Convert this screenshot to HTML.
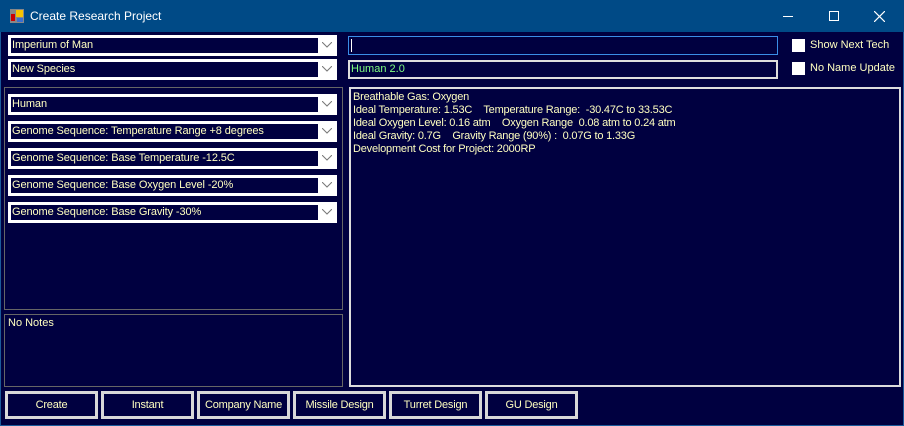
<!DOCTYPE html>
<html><head><style>
*{margin:0;padding:0;box-sizing:border-box}
body{width:904px;height:426px;background:#000040;font-family:"Liberation Sans",sans-serif;font-size:11px;color:#ffffc0;position:relative;overflow:hidden}
.tb{position:absolute;left:0;top:0;width:904px;height:32px;background:#004a86}
.frame{position:absolute;left:0;top:32px;width:904px;height:394px;border:1px solid #1a5a9a;border-top:none}
.ttl{position:absolute;left:30px;top:9px;color:#fff;font-size:12px}
.cb{position:absolute;left:8px;width:329px;height:21px;background:#fff}
.cb .in{position:absolute;left:3px;top:3px;width:307px;height:15px;background:#000040;padding-left:1px;line-height:15px;white-space:nowrap;overflow:hidden;letter-spacing:-0.1px}
.cb svg{position:absolute;right:5px;top:7px}
.tx{position:absolute;border:2px solid #ddd;background:#000040}
.btn{position:absolute;top:391px;height:28px;width:93px;border:3px solid #d8d8d8;background:#000040;text-align:center;line-height:22px;font-size:11px;letter-spacing:-0.2px}
.chk{position:absolute;left:792px;width:13px;height:13px;background:#fff}
.lbl{position:absolute;left:810px;font-size:11px}
</style></head><body>
<div class="tb"></div>
<div class="frame"></div>
<svg style="position:absolute;left:10px;top:9px" width="14" height="14"><rect x="0" y="0" width="14" height="14" fill="#888"/><rect x="6" y="1" width="7" height="7" fill="#f6c400"/><rect x="1" y="5" width="4" height="7" fill="#c00"/><rect x="7" y="9" width="6" height="4" fill="#3a6fd0"/></svg>
<div class="ttl">Create Research Project</div>
<div style="position:absolute;left:783px;top:16px;width:10px;height:1px;background:#fff"></div>
<div style="position:absolute;left:829px;top:11px;width:10px;height:10px;border:1px solid #fff"></div>
<svg style="position:absolute;left:874px;top:11px" width="11" height="11"><path d="M0 0L11 11M11 0L0 11" stroke="#fff" stroke-width="1.2"/></svg>

<div class="cb" style="top:35px"><div class="in">Imperium of Man</div><svg width="10" height="6"><path d="M0 0L5 5L10 0" stroke="#777" fill="none"/></svg></div>
<div class="cb" style="top:59px"><div class="in">New Species</div><svg width="10" height="6"><path d="M0 0L5 5L10 0" stroke="#777" fill="none"/></svg></div>

<div style="position:absolute;left:4px;top:87px;width:339px;height:223px;border:1px solid #666"></div>
<div class="cb" style="top:94px"><div class="in">Human</div><svg width="10" height="6"><path d="M0 0L5 5L10 0" stroke="#777" fill="none"/></svg></div>
<div class="cb" style="top:121px"><div class="in">Genome Sequence: Temperature Range +8 degrees</div><svg width="10" height="6"><path d="M0 0L5 5L10 0" stroke="#777" fill="none"/></svg></div>
<div class="cb" style="top:148px"><div class="in">Genome Sequence: Base Temperature -12.5C</div><svg width="10" height="6"><path d="M0 0L5 5L10 0" stroke="#777" fill="none"/></svg></div>
<div class="cb" style="top:175px"><div class="in">Genome Sequence: Base Oxygen Level -20%</div><svg width="10" height="6"><path d="M0 0L5 5L10 0" stroke="#777" fill="none"/></svg></div>
<div class="cb" style="top:202px"><div class="in">Genome Sequence: Base Gravity -30%</div><svg width="10" height="6"><path d="M0 0L5 5L10 0" stroke="#777" fill="none"/></svg></div>

<div style="position:absolute;left:4px;top:314px;width:339px;height:73px;border:1px solid #666;padding:2px 3px">No Notes</div>

<div class="tx" style="left:348px;top:36px;width:430px;height:19px;border:1px solid #3a8ee8"><div style="position:absolute;left:2px;top:2px;width:1px;height:13px;background:#fff"></div></div>
<div class="tx" style="left:348px;top:60px;width:430px;height:19px;color:#80ff80;padding-left:1px;line-height:15px">Human 2.0</div>

<div class="chk" style="top:39px"></div><div class="lbl" style="top:39px">Show Next Tech</div>
<div class="chk" style="top:62px"></div><div class="lbl" style="top:62px">No Name Update</div>

<div class="tx" style="left:349px;top:87px;width:552px;height:300px;padding:2px 2px;line-height:13px;letter-spacing:-0.2px;white-space:pre">Breathable Gas: Oxygen
Ideal Temperature: 1.53C    Temperature Range:  -30.47C to 33.53C
Ideal Oxygen Level: 0.16 atm    Oxygen Range  0.08 atm to 0.24 atm
Ideal Gravity: 0.7G    Gravity Range (90%) :  0.07G to 1.33G
Development Cost for Project: 2000RP</div>

<div class="btn" style="left:5px">Create</div>
<div class="btn" style="left:101px">Instant</div>
<div class="btn" style="left:197px">Company Name</div>
<div class="btn" style="left:293px">Missile Design</div>
<div class="btn" style="left:389px">Turret Design</div>
<div class="btn" style="left:485px">GU Design</div>
</body></html>
